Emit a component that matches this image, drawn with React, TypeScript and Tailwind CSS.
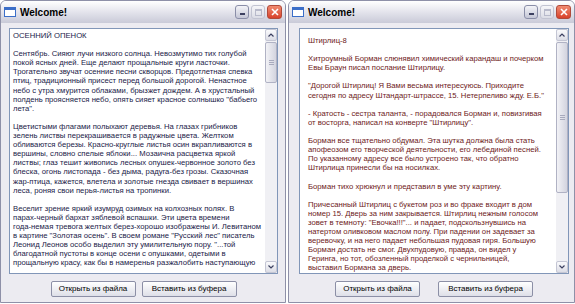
import React from "react";

const leftLines = [
  "ОСЕННИЙ ОПЕНОК",
  "",
  "Сентябрь. Сияют лучи низкого солнца. Невозмутимо тих голубой",
  "покой ясных дней. Еще делают прощальные круги ласточки.",
  "Трогательно звучат осенние песни скворцов. Предотлетная спевка",
  "птиц, традиционный присест перед большой дорогой. Ненастное",
  "небо с утра хмурится облаками, брызжет дождем. А в хрустальный",
  "полдень проясняется небо, опять сияет красное солнышко \"бабьего",
  "лета\".",
  "",
  "Цветистыми флагами полыхают деревья. На глазах грибников",
  "зелень листвы перекрашивается в радужные цвета. Желтком",
  "обливаются березы. Красно-круглые листья осин вкрапливаются в",
  "вершины, словно спелые яблоки... Мозаична расцветка яркой",
  "листвы; глаз тешит живопись лесных опушек-червонное золото без",
  "блеска, огонь листопада - без дыма, радуга-без грозы. Сказочная",
  "жар-птица, кажется, влетела и золотые гнезда свивает в вершинах",
  "леса, роняя свои перья-листья на тропинки.",
  "",
  "Веселит зрение яркий изумруд озимых на колхозных полях. В",
  "парах-черный бархат зяблевой вспашки. Эти цвета времени",
  "года-немая тревога желтых берез-хорошо изображены И. Левитаном",
  "в картине \"Золотая осень\". В своем романе \"Русский лес\" писатель",
  "Леонид Леонов особо выделил эту умилительную пору. \"...той",
  "благодатной пустоты в конце осени с опушками, одетыми в",
  "прощальную красу, как бы в намеренья разжалобить наступающую",
];

const rightLines = [
  "Штирлиц-8",
  "",
  "Хитроумный Борман слюнявил химический карандаш и почерком",
  "Евы Браун писал послание Штирлицу.",
  "",
  "\"Дорогой Штирлиц! Я Вами весьма интересуюсь. Приходите",
  "сегодня по адресу Штандарт-штрассе, 15. Нетерпеливо жду. Е.Б.\"",
  "",
  "- Кратость - сестра таланта, - порадовался Борман и, повизгивая",
  "от восторга, написал на конверте \"Штирлицу\".",
  "",
  "Борман все тщательно обдумал. Эта шутка должна была стать",
  "апофеозом его творческой деятельности, его лебединой песней.",
  "По указанному адресу все было устроено так, что обратно",
  "Штирлица принесли бы на носилках.",
  "",
  "Борман тихо хрюкнул и представил в уме эту картину.",
  "",
  "Причесанный Штирлиц с букетом роз и во фраке входит в дом",
  "номер 15. Дверь за ним закрывается. Штирлиц нежным голосом",
  "зовет в темноту: \"Евочка!!!\"... и падает, подскользнувшись на",
  "натертом оливковом маслом полу. При падении он задевает за",
  "веревочку, и на него падает небольшая пудовая гиря. Большую",
  "Борман достать не смог. Двухпудовую, правда, он видел у",
  "Геринга, но тот, обозленный проделкой с чернильницей,",
  "выставил Бормана за дверь.",
];

function TitleButtons() {
  return (
    <div className="flex items-center gap-[2px]">
      <div className="flex h-[14px] w-[14px] items-end justify-center rounded-[3px] border border-[#8a8ea8] bg-gradient-to-b from-[#f4f4f8] to-[#c4c6d6] pb-[3px]">
        <div className="h-[2px] w-[5px] bg-[#3c4060]" />
      </div>
      <div className="flex h-[14px] w-[14px] items-center justify-center rounded-[3px] border border-[#c2c4d2] bg-gradient-to-b from-[#f6f6f9] to-[#dcdde6]">
        <div className="h-[7px] w-[7px] border border-t-2 border-[#b8bacb]" />
      </div>
      <div className="flex h-[14px] w-[15px] items-center justify-center rounded-[3px] border border-[#b04a3a] bg-gradient-to-b from-[#f08a70] to-[#d8402a]">
        <svg width="8" height="8" viewBox="0 0 8 8">
          <path d="M1 1 L7 7 M7 1 L1 7" stroke="white" strokeWidth="1.6" />
        </svg>
      </div>
    </div>
  );
}

function Scrollbar({ thumbTop, thumbHeight }: { thumbTop: number; thumbHeight: number }) {
  return (
    <div className="relative flex w-[12px] flex-col bg-[#f0f0f4]">
      <div className="flex h-[12px] items-center justify-center rounded-[2px] border border-[#c4c6d4] bg-gradient-to-b from-[#fafafc] to-[#dcdde6]">
        <svg width="6" height="4" viewBox="0 0 6 4">
          <path d="M0.5 3.5 L3 1 L5.5 3.5" stroke="#3c4060" strokeWidth="1.2" fill="none" />
        </svg>
      </div>
      <div className="relative flex-1">
        <div
          className="absolute left-0 right-0 flex items-center justify-center rounded-[2px] border border-[#b0b2c4] bg-gradient-to-r from-[#f2f2f6] to-[#d3d4df]"
          style={{ top: thumbTop, height: thumbHeight }}
        >
          <div className="flex flex-col gap-[1px]">
            <div className="h-px w-[5px] bg-[#a8aabd]" />
            <div className="h-px w-[5px] bg-[#a8aabd]" />
            <div className="h-px w-[5px] bg-[#a8aabd]" />
          </div>
        </div>
      </div>
      <div className="flex h-[12px] items-center justify-center rounded-[2px] border border-[#c4c6d4] bg-gradient-to-b from-[#fafafc] to-[#dcdde6]">
        <svg width="6" height="4" viewBox="0 0 6 4">
          <path d="M0.5 0.5 L3 3 L5.5 0.5" stroke="#3c4060" strokeWidth="1.2" fill="none" />
        </svg>
      </div>
    </div>
  );
}

function XpButton({ label, width }: { label: string; width: string }) {
  return (
    <button
      className={`${width} h-[16px] rounded-[2px] border border-[#8c8fa6] bg-gradient-to-b from-[#ffffff] to-[#dedfe8] text-[8px] leading-none text-black`}
    >
      {label}
    </button>
  );
}

function Window({
  width,
  lines,
  textColor,
  textPad,
  sidePad,
  thumbTop,
  thumbHeight,
  buttonGap,
}: {
  width: string;
  lines: string[];
  textColor: string;
  textPad: string;
  sidePad: string;
  thumbTop: number;
  thumbHeight: number;
  buttonGap: string;
}) {
  return (
    <div
      className={`${width} flex h-[303px] flex-col overflow-hidden rounded-t-[6px] border border-[#8e90a8] bg-[#ecebf1]`}
    >
      <div className="flex h-[22px] items-center justify-between bg-gradient-to-b from-[#ffffff] via-[#e4e4ec] to-[#c9cad8] pl-[3px] pr-[3px]">
        <div className="flex items-center gap-[4px]">
          <div className="h-[10px] w-[12px] border border-[#3b6ec8] border-t-[3px] bg-white" />
          <span className="text-[10px] font-bold text-black">Welcome!</span>
        </div>
        <TitleButtons />
      </div>
      <div className={`flex flex-1 flex-col ${sidePad} pt-[5px]`}>
        <div className="flex h-[246px] border border-[#8196b8] bg-white">
          <div className={`flex-1 overflow-hidden ${textPad} text-[7.7px] leading-[9.1px] ${textColor}`}>
            {lines.map((line, i) => (
              <div key={i} className="whitespace-pre">
                {line || "\u00a0"}
              </div>
            ))}
          </div>
          <Scrollbar thumbTop={thumbTop} thumbHeight={thumbHeight} />
        </div>
        <div className={`mt-[7px] flex justify-center ${buttonGap}`}>
          <XpButton label="Открыть из файла" width="w-[85px]" />
          <XpButton label="Вставить из буфера" width="w-[95px]" />
        </div>
      </div>
    </div>
  );
}

export default function App() {
  return (
    <div
      className="flex h-[304px] w-[575px] gap-[2px] bg-white"
      style={{ fontFamily: '"Liberation Sans", Arial, sans-serif' }}
    >
      <Window
        width="w-[286px]"
        lines={leftLines}
        textColor="text-[#1a2248]"
        textPad="pl-[3px] pt-[2px]"
        sidePad="pl-[8px] pr-[7px]"
        thumbTop={1}
        thumbHeight={41}
        buttonGap="gap-[6px]"
      />
      <Window
        width="w-[287px]"
        lines={rightLines}
        textColor="text-[#6e1a1a]"
        textPad="pl-[8px] pt-[7px]"
        sidePad="pl-[10px] pr-[5px]"
        thumbTop={1}
        thumbHeight={151}
        buttonGap="gap-[18px]"
      />
    </div>
  );
}
